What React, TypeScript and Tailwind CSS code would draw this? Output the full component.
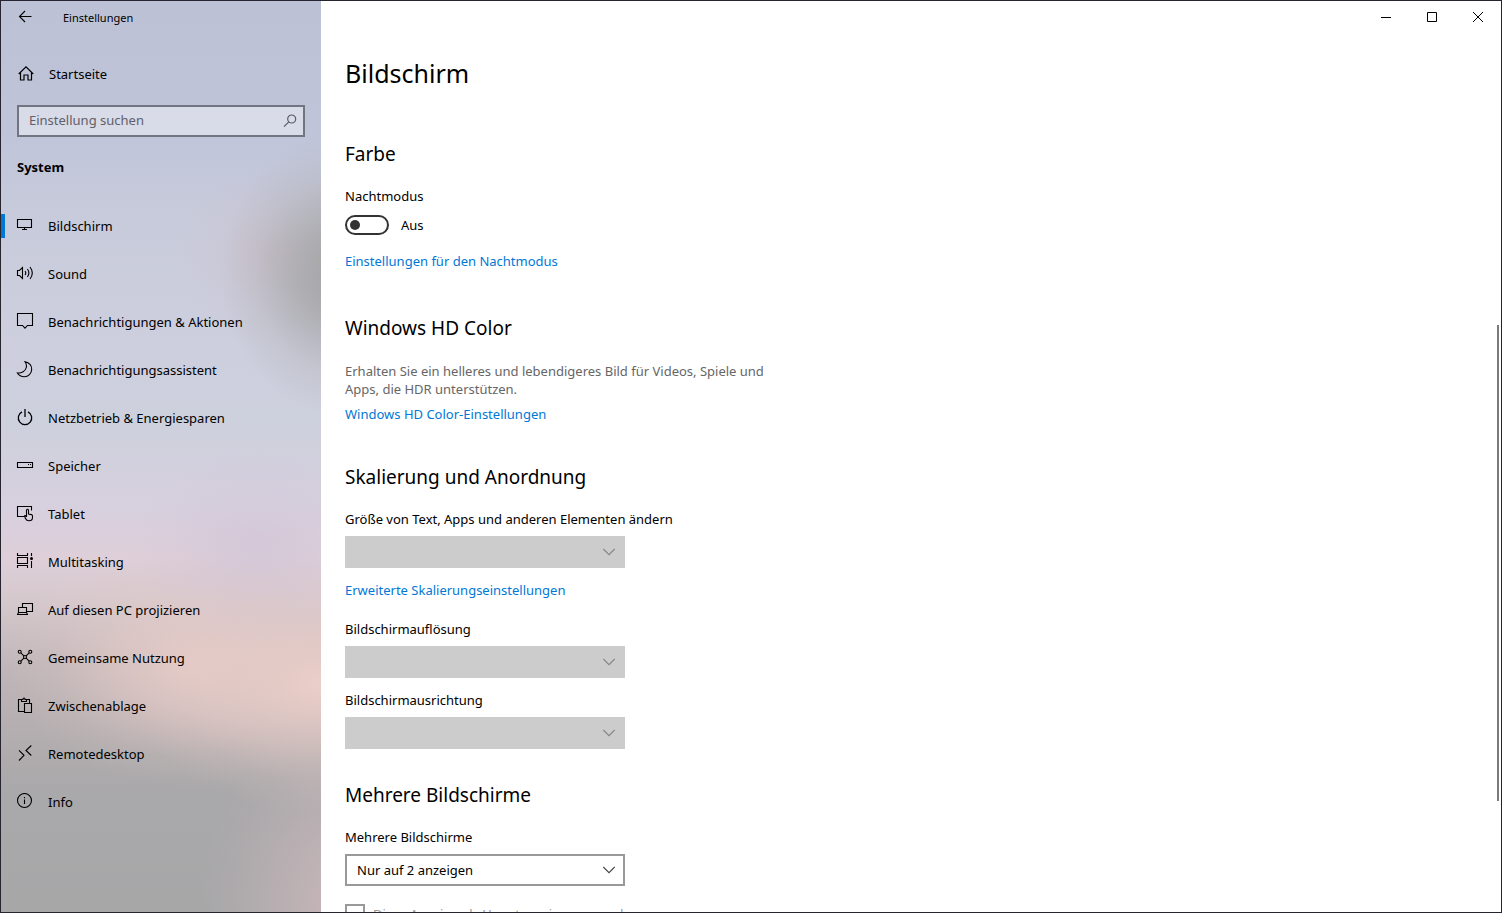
import type { ReactNode } from "react";

function Glyph({ children }: { children: ReactNode }) {
  return (
    <svg
      viewBox="0 0 18 18"
      className="h-[18px] w-[18px] shrink-0"
      fill="none"
      stroke="currentColor"
      strokeWidth="1.1"
      aria-hidden="true"
    >
      {children}
    </svg>
  );
}

const navItems: { label: string; icon: ReactNode }[] = [
  {
    label: "Bildschirm",
    icon: <path d="M1.5 2.5h14v8h-14zM8.5 10.5v2M6 12.5h5" />,
  },
  {
    label: "Sound",
    icon: (
      <path d="M1.5 5.5h2l3-3v11l-3-3h-2zM9 6q1.6 2 0 4M11.4 4q3 4 0 8M14 2q4.6 6 0 12" />
    ),
  },
  {
    label: "Benachrichtigungen & Aktionen",
    icon: <path d="M1.5 .5h15v12h-5l-2.5 2.7-2.5-2.7h-5z" />,
  },
  {
    label: "Benachrichtigungsassistent",
    icon: (
      <path d="M9 .7C13 1.5 15.7 4.5 15.7 8.3C15.7 12.7 12.3 15.7 8.3 15.7C5.3 15.7 2.8 14.3 1.4 12C5.5 12.5 9.5 10 10.3 6.5C10.7 4.5 10.3 2.3 9 .7z" />
    ),
  },
  {
    label: "Netzbetrieb & Energiesparen",
    icon: <path d="M6 2.9a6.7 6.7 0 1 0 6 0M9 0v8" strokeWidth="1.3" />,
  },
  {
    label: "Speicher",
    icon: <path d="M1.5 5.5h15v5h-15zM12 7.5h1M14 7.5h1" />,
  },
  {
    label: "Tablet",
    icon: (
      <path d="M8 11.5H1.5v-10h14v4M10.5 12V5.2a1 1 0 0 1 2 0V9l3 .6q1 .3 1 1.4v1.5q0 3.3-3.500 3.3-2.500 0-3.500-2.300l-1-2.300q.2-1.300 2 .3" />
    ),
  },
  {
    label: "Multitasking",
    icon: (
      <>
        <path d="M1.5 0v2.5h10V0M1.5 4.5h10v6h-10zM1.5 15v-2.5h10V15M15.5 0v3M15.5 8v7" />
        <circle cx="15.5" cy="5.5" r="1.5" fill="currentColor" stroke="none" />
      </>
    ),
  },
  {
    label: "Auf diesen PC projizieren",
    icon: <path d="M6.5 6.500v-4h10v8h-6M2.500 11.500v-5h8v5zM1 13.500h11M2.500 11.500l-1 2M10.500 11.500l1 2" />,
  },
  {
    label: "Gemeinsame Nutzung",
    icon: (
      <>
        <circle cx="3.7" cy="2.7" r="1.5" />
        <circle cx="14.3" cy="2.7" r="1.5" />
        <circle cx="3.7" cy="13.3" r="1.5" />
        <circle cx="14.3" cy="13.3" r="1.5" />
        <circle cx="9" cy="8" r="1.5" />
        <path d="M4.8 3.8l3.100 3.100M13.200 3.800l-3.100 3.100M4.800 12.200l3.100-3.100M13.200 12.200l-3.100-3.100" />
      </>
    ),
  },
  {
    label: "Zwischenablage",
    icon: (
      <path d="M8.5 14.500h-6v-12h3M10.500 2.500h3v4M5.500 4.500v-2h1.500q0-1.500 1-1.500t1 1.500h1.500v2zM8.500 6.500h7v9h-7z" />
    ),
  },
  {
    label: "Remotedesktop",
    icon: <path d="M3 5.300l5 5-5 5.200M15.300 .5l-5.300 5 5.300 5" />,
  },
  {
    label: "Info",
    icon: (
      <>
        <circle cx="8.5" cy="7.5" r="7" />
        <path d="M8.500 6.500V11M8.500 4v1.200" />
      </>
    ),
  },
];

function SelectField({
  id,
  label,
  value,
}: {
  id: string;
  label: string;
  value?: string;
}) {
  return (
    <div className="flex flex-col gap-[7px]">
      <label htmlFor={id}>{label}</label>
      <div className="relative w-[280px]">
        <select
          id={id}
          disabled={!value}
          className="block h-8 w-full appearance-none border-2 border-[#999] bg-white pr-8 pl-[10px] text-black opacity-100 disabled:border-[#ccc] disabled:bg-[#ccc]"
        >
          <option>{value ?? ""}</option>
        </select>
        <svg
          viewBox="0 0 12 8"
          className={
            value
              ? "pointer-events-none absolute top-3 right-[10px] h-2 w-3 text-[#444]"
              : "pointer-events-none absolute top-3 right-[10px] h-2 w-3 text-[#858585]"
          }
          fill="none"
          stroke="currentColor"
          strokeWidth="1.1"
          aria-hidden="true"
        >
          <path d="M.3 1l5.700 5.700L11.700 1" />
        </svg>
      </div>
    </div>
  );
}

function SectionTitle({ children }: { children: ReactNode }) {
  return <h2 className="text-[19px] leading-7">{children}</h2>;
}

function TextLink({ children }: { children: ReactNode }) {
  return (
    <a href="#" className="self-start text-[#0078d7]">
      {children}
    </a>
  );
}

function Sidebar() {
  return (
    <aside className="flex w-80 shrink-0 flex-col bg-[radial-gradient(120px_140px_at_106%_30%,#a3a3a3_0%,#a5a5a6bb_35%,#a9a9aa44_70%,#a9a9aa00_100%),radial-gradient(90px_90px_at_84%_28%,#d0b6bd66_0%,#d0b6bd22_55%,#d0b6bd00_100%),radial-gradient(130px_100px_at_80%_60%,#cdc1d688_0%,#cdc1d633_55%,#cdc1d600_100%),radial-gradient(190px_120px_at_60%_73%,#e9cdc8dd_0%,#e9cdc888_40%,#e9cdc822_75%,#e9cdc800_100%),radial-gradient(190px_130px_at_100%_75%,#eccfc9_0%,#eccfc988_40%,#eccfc922_75%,#eccfc900_100%),radial-gradient(160px_190px_at_112%_99%,#ccb8ba_0%,#c3b4b899_50%,#bfb2b733_80%,#bfb2b700_100%),linear-gradient(180deg,#bcc1d6_0%,#bfc4d9_14%,#c8cbdb_24%,#cdcfde_38%,#cdd0dd_46%,#d8d0de_56%,#decfd9_61%,#d5c8cc_66%,#c0b6b9_73%,#b4aeb0_80%,#a9a8aa_87%,#a7a7a8_100%)]">
      <header className="flex h-8 items-center pl-[15px]">
        <button type="button" aria-label="Zurück">
          <Glyph>
            <path d="M15.500 8.500H3.500M9 3L3.500 8.500 9 14" />
          </Glyph>
        </button>
        <span className="pt-[2px] pl-[29px] text-[11px]">Einstellungen</span>
      </header>

      <a href="#" className="mt-[17px] flex h-12 items-center gap-[15px] pl-[15px]">
        <Glyph>
          <path
            d="M2.700 9L10 1.800 17.300 9M4.500 7.500v7.500h3.500v-5h4v5h3.500V7.500"
            strokeWidth="1.2"
          />
        </Glyph>
        Startseite
      </a>

      <div className="relative mx-4 mt-[7px]">
        <input
          type="search"
          aria-label="Einstellung suchen"
          placeholder="Einstellung suchen"
          className="block h-8 w-full appearance-none border-2 border-[#72747f] bg-white/40 pr-8 pb-[2px] pl-[10px] outline-none placeholder:text-[#5f6068] placeholder:opacity-100"
        />
        <svg
          viewBox="0 0 14 14"
          className="pointer-events-none absolute top-[9px] right-2 h-[14px] w-[14px] text-[#5a5b63]"
          fill="none"
          stroke="currentColor"
          strokeWidth="1.2"
          aria-hidden="true"
        >
          <circle cx="8.7" cy="5" r="4" />
          <path d="M5.800 7.800L1 12.600" />
        </svg>
      </div>

      <h2 className="mt-5 pl-4 font-bold">System</h2>

      <nav className="mt-[25px]">
        <ul>
          {navItems.map((item, index) => (
            <li key={item.label}>
              <a
                href="#"
                aria-current={index === 0 ? "page" : undefined}
                className="group flex h-12 items-center"
              >
                <span className="h-6 w-1 group-aria-[current=page]:bg-[#0078d7]" />
                <span className="flex items-center gap-[14px] pl-[11px]">
                  <Glyph>{item.icon}</Glyph>
                  {item.label}
                </span>
              </a>
            </li>
          ))}
        </ul>
      </nav>
    </aside>
  );
}

function WindowControls() {
  return (
    <div className="flex h-8 shrink-0 justify-end">
      <button type="button" aria-label="Minimieren" className="grid w-[46px] place-items-center">
        <svg viewBox="0 0 10 10" className="h-[10px] w-[10px]" stroke="currentColor" fill="none">
          <path d="M0 5.500h10" />
        </svg>
      </button>
      <button type="button" aria-label="Maximieren" className="grid w-[46px] place-items-center">
        <svg viewBox="0 0 10 10" className="h-[10px] w-[10px]" stroke="currentColor" fill="none">
          <path d="M.5 .5h9v9h-9z" />
        </svg>
      </button>
      <button type="button" aria-label="Schließen" className="grid w-[46px] place-items-center">
        <svg viewBox="0 0 10 10" className="h-[10px] w-[10px]" stroke="currentColor" fill="none">
          <path d="M0 0l10 10M10 0L0 10" />
        </svg>
      </button>
    </div>
  );
}

export default function App() {
  return (
    <div className="flex h-screen overflow-hidden border border-[#25242f] bg-white font-['Noto_Sans','Open_Sans',sans-serif] text-[13px] leading-5 text-black">
      <Sidebar />
      <main className="relative flex min-w-0 flex-1 flex-col overflow-hidden">
        <WindowControls />
        <div className="flex flex-col pt-[22px] pl-6">
          <h1 className="text-[25px] leading-9">Bildschirm</h1>

          <section className="mt-[49px] flex flex-col">
            <SectionTitle>Farbe</SectionTitle>
            <label htmlFor="night" className="mt-[18px]">
              Nachtmodus
            </label>
            <div className="mt-[9px] flex items-center gap-3">
              <input
                id="night"
                type="checkbox"
                role="switch"
                className="flex h-5 w-11 appearance-none items-center rounded-full border-2 border-[#333] pl-[3px] before:h-[10px] before:w-[10px] before:rounded-full before:bg-[#333] checked:justify-end checked:pr-[3px]"
              />
              <span>Aus</span>
            </div>
            <div className="mt-4 flex flex-col">
              <TextLink>Einstellungen für den Nachtmodus</TextLink>
            </div>
          </section>

          <section className="mt-[43px] flex flex-col">
            <SectionTitle>Windows HD Color</SectionTitle>
            <p className="mt-5 mb-[6px] max-w-[440px] leading-[18px] text-[#666]">
              Erhalten Sie ein helleres und lebendigeres Bild für Videos, Spiele und Apps, die HDR
              unterstützen.
            </p>
            <TextLink>Windows HD Color-Einstellungen</TextLink>
          </section>

          <section className="mt-[39px] flex flex-col">
            <SectionTitle>Skalierung und Anordnung</SectionTitle>
            <div className="mt-[18px] flex flex-col gap-3">
              <SelectField id="scale" label="Größe von Text, Apps und anderen Elementen ändern" />
              <TextLink>Erweiterte Skalierungseinstellungen</TextLink>
            </div>
            <div className="mt-[19px] flex flex-col gap-3">
              <SelectField id="resolution" label="Bildschirmauflösung" />
              <SelectField id="orientation" label="Bildschirmausrichtung" />
            </div>
          </section>

          <section className="mt-8 flex flex-col">
            <SectionTitle>Mehrere Bildschirme</SectionTitle>
            <div className="mt-[18px] flex flex-col gap-[18px]">
              <SelectField id="multi" label="Mehrere Bildschirme" value="Nur auf 2 anzeigen" />
              <label className="flex items-center gap-2 text-[#999]">
                <input
                  type="checkbox"
                  disabled
                  className="h-5 w-5 appearance-none border-2 border-[#999]"
                />
                Diese Anzeige als Hauptanzeige verwenden
              </label>
            </div>
          </section>
        </div>
        <div className="absolute top-[35.6%] right-[2px] h-[52.2%] w-[2px] bg-[#7a7a7a]" />
      </main>
    </div>
  );
}
